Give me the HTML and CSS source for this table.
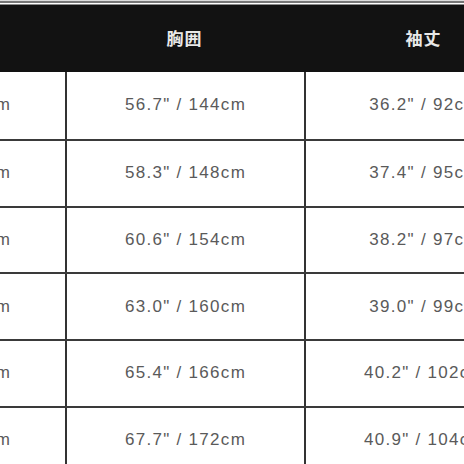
FILE: index.html
```
<!DOCTYPE html>
<html lang="ja">
<head>
<meta charset="utf-8">
<link rel="stylesheet" href="styles.css">
</head>
<body>
<div class="page">
  <div class="rule"></div>
  <div class="table">
    <div class="row head">
      <div class="cell">着丈</div>
      <div class="cell">胸囲</div>
      <div class="cell">袖丈</div>
    </div>
    <div class="row">
      <div class="cell">28.3" / 72cm</div>
      <div class="cell">56.7" / 144cm</div>
      <div class="cell">36.2" / 92cm</div>
    </div>
    <div class="row">
      <div class="cell">29.1" / 74cm</div>
      <div class="cell">58.3" / 148cm</div>
      <div class="cell">37.4" / 95cm</div>
    </div>
    <div class="row">
      <div class="cell">29.9" / 76cm</div>
      <div class="cell">60.6" / 154cm</div>
      <div class="cell">38.2" / 97cm</div>
    </div>
    <div class="row">
      <div class="cell">30.7" / 78cm</div>
      <div class="cell">63.0" / 160cm</div>
      <div class="cell">39.0" / 99cm</div>
    </div>
    <div class="row">
      <div class="cell">31.5" / 80cm</div>
      <div class="cell">65.4" / 166cm</div>
      <div class="cell">40.2" / 102cm</div>
    </div>
    <div class="row">
      <div class="cell">32.3" / 82cm</div>
      <div class="cell">67.7" / 172cm</div>
      <div class="cell">40.9" / 104cm</div>
    </div>
  </div>
</div>
</body>
</html>
```
FILE: styles.css
```
html, body {
  margin: 0;
  padding: 0;
  background: #fff;
  overflow: hidden;
}
.page {
  width: 464px;
  height: 464px;
  overflow: hidden;
}
.rule {
  height: 2px;
  background: #777;
  border-top: 1px solid #ddd;
  border-bottom: 1px solid #fff;
}
.table {
  margin-left: -153px;
  width: 720px;
}
.row {
  display: grid;
  grid-template-columns: 218px 239px 239px;
  height: 66.75px;
  box-sizing: border-box;
  border-top: 2px solid #3a3a3a;
}
.row.head {
  height: 68px;
  background: #121212;
  border-top: 1px solid #8a8a8a;
}
.row:nth-child(2) {
  border-top: none;
}
.cell {
  display: flex;
  align-items: center;
  justify-content: center;
  font-family: "Liberation Sans", Arial, sans-serif;
  font-size: 17px;
  letter-spacing: 1.3px;
  color: #5a5a5a;
  border-left: 2px solid #333;
}
.cell:first-child {
  border-left: none;
}
.head .cell {
  border-left: none;
  color: #e8e8e8;
  font-family: "Noto Sans CJK JP", sans-serif;
  font-weight: 700;
  font-size: 17px;
  letter-spacing: 1px;
  padding-bottom: 2px;
}
```
